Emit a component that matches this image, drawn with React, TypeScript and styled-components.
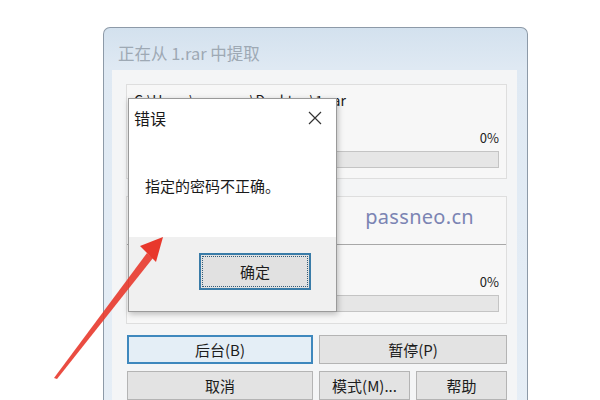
import React from "react";
import styled, { createGlobalStyle } from "styled-components";

const Global = createGlobalStyle`
  html, body { margin: 0; padding: 0; background: #ffffff; }
  body { font-family: "Noto Sans CJK SC", "Noto Sans", sans-serif; }
`;

const Page = styled.div`
  position: relative;
  width: 600px;
  height: 400px;
  overflow: hidden;
  background: #ffffff;
`;

const Window = styled.div`
  margin: 27px 0 0 103px;
  width: 425px;
  height: 400px;
  box-sizing: border-box;
  border: 1px solid #8d9aa8;
  border-bottom: none;
  border-radius: 7px 7px 0 0;
  background: linear-gradient(#d3e1ee, #dfe9f3 40px, #e6eef6);
  display: flex;
  flex-direction: column;
`;

const TitleBar = styled.div`
  height: 42px;
  box-sizing: border-box;
  display: flex;
  align-items: center;
  padding: 8px 0 0 14px;
  font-size: 16.5px;
  color: #9ea9b4;
`;

const Client = styled.div`
  flex: 1;
  margin: 0 10px 0 8px;
  background: #f4f5f6;
  padding: 14px 10px 0 14px;
  display: flex;
  flex-direction: column;
`;

const Group = styled.div<{ $h: number }>`
  height: ${(p) => p.$h}px;
  box-sizing: border-box;
  border: 1px solid #dedede;
  background: #f7f7f7;
  padding: 0 7px 0 7px;
  display: flex;
  flex-direction: column;
  margin-bottom: ${(p) => (p.$h > 100 ? 11 : 17)}px;
`;

const PathText = styled.div`
  margin-top: 5px;
  font-size: 14px;
  letter-spacing: 0.15px;
  color: #1a1a1a;
  white-space: nowrap;
`;

const Percent = styled.div<{ $top: number }>`
  margin-top: ${(p) => p.$top}px;
  text-align: right;
  font-size: 13px;
  color: #222;
  line-height: 17px;
`;

const Bar = styled.div`
  margin-top: 5px;
  height: 17px;
  box-sizing: border-box;
  border: 1px solid #c4c4c4;
  background: #e6e6e6;
`;

const InfoArea = styled.div`
  height: 47px;
  margin: 0 -7px;
  border-bottom: 1px solid #a8a8a8;
  display: flex;
  justify-content: flex-end;
  align-items: center;
  padding-right: 32px;
`;

const Watermark = styled.span`
  font-family: "Noto Sans", "DejaVu Sans", sans-serif;
  font-size: 20px;
  color: #7b84b3;
  letter-spacing: 0.3px;
  margin-top: -8px;
`;

const ButtonRow = styled.div<{ $cols: string }>`
  display: grid;
  grid-template-columns: ${(p) => p.$cols};
  gap: 6px;
  margin-bottom: 7px;
  padding-left: 1px;
`;

const Button = styled.div<{ $focus?: boolean }>`
  height: 29px;
  box-sizing: border-box;
  border: ${(p) => (p.$focus ? "2px solid #3f88bd" : "1px solid #b4b4b4")};
  background: ${(p) => (p.$focus ? "#e4eef6" : "#e3e3e3")};
  display: flex;
  align-items: center;
  justify-content: center;
  font-size: 15px;
  color: #1c1c1c;
`;

const Dialog = styled.div`
  position: absolute;
  left: 128px;
  top: 98px;
  width: 209px;
  height: 214px;
  box-sizing: border-box;
  border: 1px solid #9a9a9a;
  background: #ffffff;
  box-shadow: 1px 2px 6px rgba(0, 0, 0, 0.25);
  display: flex;
  flex-direction: column;
`;

const DialogHead = styled.div`
  height: 38px;
  display: flex;
  align-items: center;
  justify-content: space-between;
  padding: 0 14px 0 5px;
  font-size: 16px;
  color: #1a1a1a;
`;

const DialogBody = styled.div`
  flex: 1;
  padding: 38px 0 0 16px;
  font-size: 15px;
  color: #1a1a1a;
`;

const DialogFoot = styled.div`
  height: 74px;
  box-sizing: border-box;
  background: #f0f0f0;
  display: flex;
  justify-content: flex-end;
  align-items: flex-start;
  padding: 16px 25px 0 0;
`;

const OkButton = styled.div`
  width: 112px;
  height: 37px;
  box-sizing: border-box;
  border: 2px solid #3a7ca8;
  background: #e1e1e1;
  display: flex;
  align-items: center;
  justify-content: center;
  font-size: 15px;
  color: #1c1c1c;
  outline: 1px dotted #355d78;
  outline-offset: -4px;
`;

const Arrow = styled.svg`
  position: absolute;
  left: 0;
  top: 0;
  pointer-events: none;
`;

export default function App() {
  return (
    <Page>
      <Global />
      <Window>
        <TitleBar>正在从 1.rar 中提取</TitleBar>
        <Client>
          <Group $h={95}>
            <PathText>C:\Users\passneo\Desktop\1.rar</PathText>
            <Percent $top={19}>0%</Percent>
            <Bar />
          </Group>
          <Group $h={128}>
            <InfoArea>
              <Watermark>passneo.cn</Watermark>
            </InfoArea>
            <Percent $top={28}>0%</Percent>
            <Bar />
          </Group>
          <ButtonRow $cols="186px 188px">
            <Button $focus>后台(B)</Button>
            <Button>暂停(P)</Button>
          </ButtonRow>
          <ButtonRow $cols="186px 91px 91px">
            <Button>取消</Button>
            <Button>模式(M)...</Button>
            <Button>帮助</Button>
          </ButtonRow>
        </Client>
      </Window>

      <Dialog>
        <DialogHead>
          <span>错误</span>
          <svg width="14" height="14" viewBox="0 0 14 14">
            <path d="M1 1 L13 13 M13 1 L1 13" stroke="#333" strokeWidth="1.2" fill="none" />
          </svg>
        </DialogHead>
        <DialogBody>指定的密码不正确。</DialogBody>
        <DialogFoot>
          <OkButton>确定</OkButton>
        </DialogFoot>
      </Dialog>

      <Arrow width="600" height="400" viewBox="0 0 600 400">
        <polygon points="54,378 147,253 153,258 57,379" fill="#e8382c" opacity="0.9" />
        <polygon points="163,237 140,246 156,262" fill="#e8382c" />
      </Arrow>
    </Page>
  );
}
